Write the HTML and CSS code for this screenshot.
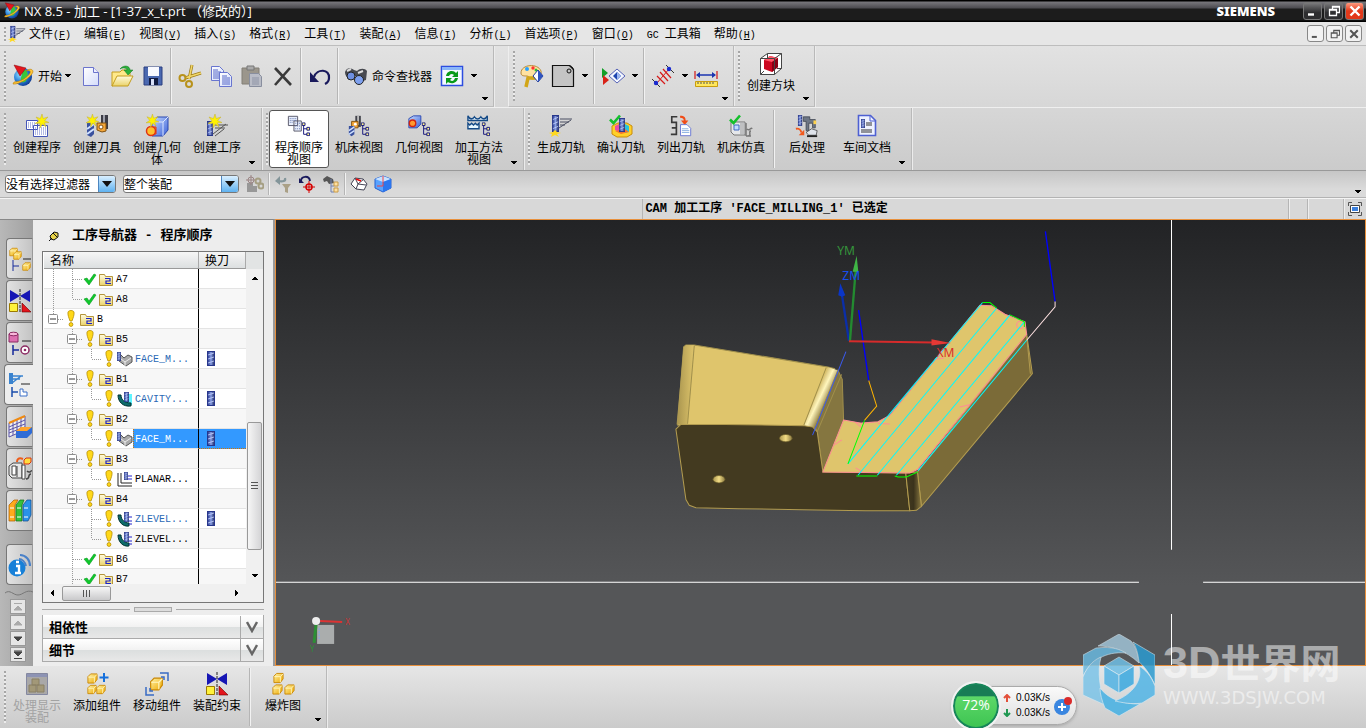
FILE: index.html
```html
<!DOCTYPE html>
<html lang="zh-CN">
<head>
<meta charset="utf-8">
<title>NX 8.5 - 加工</title>
<link rel="stylesheet" href="styles.css">
</head>
<body>
<svg class="defs" aria-hidden="true">
<defs>
<linearGradient id="g-gold" x1="0" y1="0" x2="1" y2="1"><stop offset="0" stop-color="#fff3a8"/><stop offset="1" stop-color="#eda800"/></linearGradient>
<linearGradient id="g-folder" x1="0" y1="0" x2="0" y2="1"><stop offset="0" stop-color="#fffbe0"/><stop offset="1" stop-color="#ead36a"/></linearGradient>
<linearGradient id="g-page" x1="0" y1="0" x2="1" y2="1"><stop offset="0" stop-color="#fff"/><stop offset="1" stop-color="#d4dcfa"/></linearGradient>
<linearGradient id="g-steel" x1="0" y1="0" x2="1" y2="0"><stop offset="0" stop-color="#1d2f86"/><stop offset=".5" stop-color="#8aa0e6"/><stop offset="1" stop-color="#1b2660"/></linearGradient>
<linearGradient id="g-blue" x1="0" y1="0" x2="1" y2="1"><stop offset="0" stop-color="#c6dbff"/><stop offset="1" stop-color="#3d62d8"/></linearGradient>
<linearGradient id="g-fillet" gradientUnits="userSpaceOnUse" x1="460" y1="500" x2="502" y2="520"><stop offset="0" stop-color="#c9ae5a"/><stop offset=".5" stop-color="#fff6bd"/><stop offset="1" stop-color="#9b894b"/></linearGradient>
<linearGradient id="g-corner" x1="0" y1="0" x2="1" y2="0"><stop offset="0" stop-color="#443b20"/><stop offset=".5" stop-color="#3b331c"/><stop offset="1" stop-color="#8a7940"/></linearGradient>
<linearGradient id="g-edge" x1="0" y1="0" x2="1" y2="0"><stop offset="0" stop-color="#a8944e"/><stop offset="1" stop-color="#dfc56c"/></linearGradient>
<linearGradient id="g-hole" x1="0" y1="0" x2="1" y2="0"><stop offset="0" stop-color="#a8944e"/><stop offset=".5" stop-color="#f3dd85"/><stop offset="1" stop-color="#8a7940"/></linearGradient>
<radialGradient id="g-globe" cx=".35" cy=".35" r=".7"><stop offset="0" stop-color="#9be8ff"/><stop offset=".6" stop-color="#2178d8"/><stop offset="1" stop-color="#123a90"/></radialGradient>

<symbol id="arrow" viewBox="0 0 6 4"><path d="M0 0h6v1h-1v1h-1v1h-2v-1h-1v-1h-1z"/></symbol>
<symbol id="down" viewBox="0 0 12 8"><path d="M1 1h10L6 7z" fill="#111"/></symbol>
<symbol id="star" viewBox="0 0 14 14"><path d="M7 0l1.200 4.500L13 3 9.600 6.600 14 8.500 9.400 8.800 11 13 7.500 10 5 14 5 9.300 0 9.500 4 7 1 3 5.400 4.600z" fill="#fff200" stroke="#c7b53e" stroke-width=".6"/></symbol>
<symbol id="mill" viewBox="0 0 8 15" preserveAspectRatio="none"><rect x=".5" y=".5" width="7" height="14" fill="url(#g-steel)" stroke="#27368c"/><path d="M1 4l6-2M1 8l6-2M1 12l6-2" stroke="#c8d4ff" stroke-width=".8"/></symbol>
<symbol id="bits" viewBox="0 0 9 15"><path d="M2 3v10h4M2 7h4" fill="none" stroke="#10107c"/><g fill="#fff689" stroke="#10107c"><path d="M.5.5h3v3h-3zM5.500 5.500h3v3h-3zM5.500 11.500h3v3h-3z"/></g></symbol>
<symbol id="brick" viewBox="0 0 12 12"><path d="M1 4l3-3h7v6l-3 4H1z" fill="url(#g-gold)" stroke="#c98600"/><path d="M1.500 4.500H8v6M8 4.500l3-3" fill="none" stroke="#fff6c0"/></symbol>
<symbol id="tick" viewBox="0 0 12 11"><path d="M1 5.500L4.500 9 11 1.500" fill="none" stroke="#14c02c" stroke-width="2.600"/></symbol>

<symbol id="nx" viewBox="0 0 24 24"><circle cx="12" cy="13" r="9" fill="url(#g-globe)"/><path d="M12 5c5 1 6 6 3 12-3 3-6 1-5-3z" fill="#38c73c"/><path d="M2 20c4 1 17-5 20-12 0-4-5-3-7-1 4-1 5 0 4 2-3 5-10 9-16 9z" fill="#ffc636" stroke="#b87900" stroke-width=".6"/><path d="M3 1l12 3-6 8z" fill="#e3151d" stroke="#8b0008" stroke-width=".5"/></symbol>
<symbol id="new" viewBox="0 0 24 24"><path d="M4.500 3.500h10l5 5v13h-15z" fill="url(#g-page)" stroke="#6b74cc"/><path d="M14.500 3.500v5h5" fill="#eef" stroke="#6b74cc"/></symbol>
<symbol id="open" viewBox="0 0 24 24"><path d="M2 22V8h8l2-2h8v9z" fill="#ffe98a" stroke="#c49d1e"/><path d="M2 22l5-10h16l-5 10z" fill="url(#g-folder)" stroke="#c49d1e"/><path d="M10 5c4-5 10-3 10 1h3l-5 5-4-5h3c0-2-4-3-7-1z" fill="#2bb03a" stroke="#137722" stroke-width=".5"/></symbol>
<symbol id="save" viewBox="0 0 24 24"><path d="M3 3h18v18H3z" fill="#4a68b0" stroke="#2a3f80"/><path d="M7 3h11v9H7z" fill="#f8f9ff"/><path d="M8 14h9v7H8z" fill="#111b40"/><path d="M10 15h3v6h-3z" fill="#d8e0f8"/></symbol>
<symbol id="cut" viewBox="0 0 24 24"><path d="M14 1l-3 14M23 9L7 14" stroke="#9f7d16" stroke-width="3"/><path d="M14 1l-3 14M23 9L7 14" stroke="#f1d76a" stroke-width="1.500"/><circle cx="4.500" cy="14" r="3" fill="none" stroke="#b8921c" stroke-width="2"/><circle cx="11" cy="20" r="3" fill="none" stroke="#b8921c" stroke-width="2"/></symbol>
<symbol id="copy" viewBox="0 0 24 24"><g fill="url(#g-page)" stroke="#6875cf"><path d="M2.500 2.500h8l4 4v10h-12z"/><path d="M10.500 8.500h8l4 4v10h-12z"/></g><path d="M4 6h5M4 8h8M4 10h6M4 12h6M4 14h6M13 12h5M13 14h8M13 16h8M13 18h8M13 20h8" stroke="#5567c8"/></symbol>
<symbol id="paste" viewBox="0 0 24 24"><path d="M2 4h17v16H2z" fill="#9b968c" stroke="#827e77"/><path d="M7 2h7v4H7z" fill="#aaa" stroke="#777"/><path d="M9.500 9.500h9l3 3v10h-12z" fill="#b9bcc6" stroke="#888e9e"/><path d="M12 14h7M12 16h7M12 18h7M12 20h7" stroke="#8d93a5"/></symbol>
<symbol id="del" viewBox="0 0 24 24"><path d="M4 4l16 17M19 4L4 21" stroke="#3a3a3a" stroke-width="2.600"/></symbol>
<symbol id="undo" viewBox="0 0 24 24"><path d="M6 13c3-9 16-8 15 1 0 3-2 5-4 6" fill="none" stroke="#1a1a5c" stroke-width="2.200"/><path d="M2 8v10h9z" fill="#1a1a5c"/></symbol>
<symbol id="bino" viewBox="0 0 24 24"><path d="M1 8c2-5 6-4 9-2l3 1c3-3 8-3 10 0l-1 9-6 2-4-6-5 2c-3 1-6-2-6-6z" fill="#47494f"/><circle cx="7" cy="12" r="4" fill="#6e8fe0" stroke="#222"/><circle cx="15" cy="16" r="4.500" fill="#7ea0ee" stroke="#222"/><path d="M3 7l4-2M14 9l5-2" stroke="#ddd" stroke-width="2"/></symbol>
<symbol id="refresh" viewBox="0 0 24 24"><path d="M1.500 2.500h21v19h-21z" fill="#f4f8ff" stroke="#2d4de0" stroke-width="1.500"/><path d="M2 3h20v3H2z" fill="#8ab6f8"/><g fill="#089a18"><path d="M6 12c1-6 8-6 10-3l2-2v6h-6l2-2c-2-2-4-1-5 1z"/><path d="M18 14c-1 6-8 6-10 4l-2 2v-6h6l-2 2c2 2 4 1 5-2z"/></g></symbol>
<symbol id="palette" viewBox="0 0 24 24"><path d="M1 9c0-9 17-10 20-2 1 6-3 8-9 8-3 0-2-3-5-3S1 12 1 9z" fill="#ffe2a0" stroke="#b78a3a"/><circle cx="7" cy="5" r="2" fill="#29a0ff"/><circle cx="13" cy="4" r="1.700" fill="#f33"/><circle cx="16" cy="6" r="1.500" fill="#3b3"/><path d="M6 23l2-9 9 0" stroke="#d2a618" stroke-width="3.500" fill="none"/><path d="M18 6l5 6-5 6-5-6z" fill="#fff" stroke="#223c9a"/><path d="M18 6l5 6-5 6z" fill="#3055c0"/></symbol>
<symbol id="sheet" viewBox="0 0 24 24"><path d="M1.500 1.500h17l4 4v17h-21z" fill="#c4c4c4" stroke="#111" stroke-width="1.200"/><path d="M16 1.500c4 0 6 1 6.500 5" fill="none" stroke="#111"/><circle cx="18" cy="7" r="2" fill="none" stroke="#111"/></symbol>
<symbol id="play" viewBox="0 0 24 24"><path d="M1 4l6 5-6 5z" fill="#12a028"/><path d="M2 11l6 5-6 5z" fill="#d82218"/><path d="M16 5l8 7-8 7-8-7z" fill="#f4f7ff" stroke="#5662b6"/><path d="M16 8l4 4-4 4-4-4z" fill="#1e46b0"/><path d="M16 8l4 4-4 4z" fill="#9db6ee"/></symbol>
<symbol id="measure" viewBox="0 0 24 24"><path d="M1 15l8 8M15 1l8 8" stroke="#333"/><path d="M6 19L18 5" stroke="#d61b1b"/><path d="M6 12l8 8M9 8l8 9M12 5l8 9" stroke="#d61b1b" stroke-width="1.200"/><circle cx="5" cy="19" r="2.200" fill="#1b2bd0"/><circle cx="18" cy="5" r="2.200" fill="#1b2bd0"/></symbol>
<symbol id="ruler" viewBox="0 0 24 24"><path d="M1 7v8M23 7v8" stroke="#d01818" stroke-width="1.200"/><path d="M3 11h18" stroke="#1b34b0" stroke-width="1.500"/><path d="M2 11l4-3v6zM22 11l-4-3v6z" fill="#1b34b0"/><path d="M1.500 17.500h22v5h-22z" fill="#ffe75c" stroke="#c99d0e"/><path d="M4 18v2M7 18v2M10 18v2M13 18v2M16 18v2M19 18v2" stroke="#555"/></symbol>
<symbol id="cube" viewBox="0 0 24 24"><path d="M1.500 6.500l7-5h14v15l-7 6h-14z" fill="#fff" stroke="#444"/><path d="M5 8l6-4 8 2v9l-6 5-8-3z" fill="#cc0720"/><path d="M5 8l6-4 8 2-6 4z" fill="#ff5566"/><path d="M13 10l6-4v9l-6 5z" fill="#8a0014"/><path d="M1.500 6.500h14v16M15.500 6.500l7-5M8.500 1.500v5M18 16.500h4.500M5 19l-3.500 3.500" fill="none" stroke="#444"/></symbol>

<symbol id="c-prog" viewBox="0 0 24 24"><path d="M1.500 6.500h11v9h-11zM8.500 11.500h14v11h-14z" fill="#fff" stroke="#4657b8"/><path d="M3 9h8M3 11h8M3 13h5M10 14h11M10 16h11M10 18h11M10 20h11" stroke="#6876c8" stroke-dasharray="1 1"/><use href="#star" x="10" y="0" width="14" height="14"/></symbol>
<symbol id="c-tool" viewBox="0 0 24 24"><path d="M16 1h7v14h-7z" fill="#3c3c46"/><path d="M18 1h2v14h-2z" fill="#9ea0aa"/><path d="M12 9h9v8l-4 1-5-2z" fill="#f3a63a" stroke="#81500e"/><circle cx="16" cy="13" r="2" fill="#fff" stroke="#81500e"/><path d="M2 9h7v11l-3 3-4-2z" fill="#39519e"/><path d="M2 15l7-5M2 20l7-5" stroke="#cfe0ff" stroke-width="2"/><use href="#star" x="1" y="0" width="13" height="13"/></symbol>
<symbol id="c-geo" viewBox="0 0 24 24"><path d="M7 8l5-5h11v13l-5 6H7z" fill="url(#g-blue)" stroke="#2a48b0"/><path d="M7 8h11v14M18 8l5-5" fill="none" stroke="#dbe6ff"/><path d="M6 13h5v7H6z" fill="#ffbf2e" stroke="#e03311"/><circle cx="6" cy="17" r="4.500" fill="#ffbf2e" stroke="#e03311" stroke-width="1.500"/><use href="#star" x="1" y="0" width="13" height="13"/></symbol>
<symbol id="c-op" viewBox="0 0 24 24"><use href="#mill" x="2" y="7" width="6" height="15"/><path d="M10 11h13M10 14h10M8 20l13-10M10 22l9-7" stroke="#555"/><use href="#star" x="3" y="0" width="14" height="14"/></symbol>
<symbol id="v-prog" viewBox="0 0 26 24"><path d="M1.500 1.500h10v10h-10zM7.500 6.500h8v11h-8z" fill="#e8eefc" stroke="#556"/><path d="M3 4h7M3 6h7M3 8h4M9 9h5M9 12h5M9 15h5" stroke="#5a6fa8" stroke-dasharray="1 1"/><use href="#bits" x="16" y="8" width="9" height="15"/></symbol>
<symbol id="v-mach" viewBox="0 0 26 24"><path d="M9 1h6v12H9z" fill="#44454d"/><path d="M11 1h2v10h-2z" fill="#bbb"/><path d="M5 7h7v7H5z" fill="#f3a63a" stroke="#81500e"/><circle cx="9" cy="10" r="1.500" fill="#fff"/><path d="M2 12h6v9l-3 2-3-2z" fill="#39519e"/><path d="M2 17l6-4M2 21l6-4" stroke="#cfe0ff" stroke-width="1.500"/><use href="#bits" x="15" y="8" width="9" height="15"/></symbol>
<symbol id="v-geo" viewBox="0 0 26 24"><path d="M2 4l5-3h8v9l-4 4H2z" fill="url(#g-blue)" stroke="#2a48b0"/><circle cx="6" cy="9" r="3.500" fill="#ff9a2e" stroke="#d2230f" stroke-width="1.500"/><use href="#bits" x="16" y="8" width="9" height="15"/></symbol>
<symbol id="v-meth" viewBox="0 0 26 24"><g fill="#e8f7ff" stroke="#154a86" stroke-width="1.500"><path d="M1 1v5h21V1c-2 4-5 4-7 1-2 3-5 3-7 0-2 3-5 3-7-1z"/><path d="M1 15V9l2 2 2-2 2 2 2-2 2 2 2-2v6z"/></g><use href="#bits" x="16" y="8" width="9" height="15"/></symbol>
<symbol id="gen" viewBox="0 0 24 24"><use href="#mill" x="3" y="1" width="7" height="17"/><path d="M11 5h12M11 8h9M11 11h5M10 14L22 6" stroke="#4a4f62"/><path d="M0 19l4-1 2-2 2 2 4 1-4 1 2 3-4-2-4 2 1-3z" fill="#ffd91f"/></symbol>
<symbol id="verify" viewBox="0 0 24 24"><path d="M3 12l6-3h9l5 3v8l-5 3H8l-5-3z" fill="#ffd028" stroke="#c98d0b"/><path d="M6 12l4-2v8l-4-2z" fill="#e74caa"/><path d="M16 10l4 2v6l-4 1z" fill="#28c4de"/><path d="M6 17l6 3 8-2-4-3z" fill="#f4762c"/><use href="#mill" x="10" y="4" width="6" height="14"/><use href="#tick" x="0" y="0" width="12" height="11"/></symbol>
<symbol id="list" viewBox="0 0 26 24"><path d="M9 2H3v6h5v6H3M3 14v0h5v7H2" fill="none" stroke="#393939" stroke-width="1.800"/><path d="M12 1c5 0 6 2 6 5h3l-4 5-4-5h3c0-2-1-3-4-3z" fill="#f04c18"/><path d="M12.500 10.500h7l4 4v8h-11z" fill="#fff" stroke="#6573d0"/><path d="M14 15h7M14 17h8M14 19h8" stroke="#87aee0"/></symbol>
<symbol id="sim" viewBox="0 0 24 24"><path d="M2 8h14v13H5l-3-3z" fill="#e5e7ea" stroke="#777"/><path d="M5 11h5v5H5z" fill="#c0dcff" stroke="#4169bf"/><path d="M12 9v11M14 9v11" stroke="#999"/><path d="M17 9v13M19 22c4 0 0-5 3-5M18 15c3 3 4-3 5 0M17 22h5" stroke="#777" stroke-width="1.500" fill="none"/><use href="#tick" x="0" y="0" width="12" height="11"/></symbol>
<symbol id="post" viewBox="0 0 26 24"><use href="#mill" x="3" y="0" width="5" height="12"/><path d="M1 15c4-1 5 1 6 4" fill="none" stroke="#f1591d" stroke-width="2"/><path d="M10 16v6H4z" fill="#f1591d"/><path d="M9 2h7v3h6v9h-3V9h-4v8h-3V7H9z" fill="#6e7785" stroke="#2d3340" stroke-width=".7"/><path d="M12 19l6-4 6 2-1 5h-8z" fill="#dfe3ea" stroke="#222" stroke-width=".7"/><path d="M13 23h11" stroke="#222" stroke-width="2"/><path d="M20 6h3v4h-3z" fill="#ffd34d"/></symbol>
<symbol id="doc" viewBox="0 0 24 24"><path d="M3.500 1.500h12l5 5v15h-17z" fill="#eef2ff" stroke="#4e60d2" stroke-width="1.600"/><path d="M15 2v5h5" fill="none" stroke="#4e60d2"/><use href="#mill" x="6" y="5" width="4" height="9"/><path d="M11 9h6M11 11h6M6 16h11M6 18h11" stroke="#333"/></symbol>

<symbol id="f-link" viewBox="0 0 18 18"><path d="M1 8h6v9H1zM6 11h5v6H6z" fill="#989898"/><circle cx="5" cy="5" r="3" fill="none" stroke="#9b8585"/><path d="M5 0v10M0 5h10" stroke="#9b8585"/><circle cx="12" cy="6" r="2.500" fill="none" stroke="#a59f83" stroke-width="2"/><circle cx="15" cy="11" r="2.500" fill="none" stroke="#a59f83" stroke-width="2"/></symbol>
<symbol id="f-filter" viewBox="0 0 18 18"><path d="M4 6c5 1 8 0 7-3" fill="none" stroke="#83959a" stroke-width="2.200"/><path d="M6 1v9L1 6z" fill="#83959a"/><path d="M8 9h9l-3 4v5l-3-1v-4z" fill="#aaa086"/></symbol>
<symbol id="f-target" viewBox="0 0 18 18"><path d="M3 6c0-5 8-6 9 0" fill="none" stroke="#1a1a5c" stroke-width="2"/><path d="M1 3v5h5z" fill="#1a1a5c"/><circle cx="11" cy="12" r="3" fill="none" stroke="#d60000" stroke-width="1.500"/><path d="M11 6v12M5 12h12" stroke="#d60000"/></symbol>
<symbol id="f-find" viewBox="0 0 18 18"><path d="M1 4l4-3 6 3 1 4-5 1-2-3-3 1z" fill="#555"/><path d="M9 4v13h3M9 11h3" stroke="#7080b0" fill="none"/><path d="M12 7h4v4h-4zM12 13h4v4h-4z" fill="#ffe0a0" stroke="#c89a48"/></symbol>
<symbol id="f-solid" viewBox="0 0 18 18"><path d="M1 9l4-6 8 1 4 5-3 6-8-1z" fill="#fff" stroke="#445"/><path d="M5 3l3 6-2 5M8 9l6-5M8 9l8 1" stroke="#445" fill="none"/><path d="M6 4l5 2" stroke="#e00" stroke-width="1.500"/></symbol>
<symbol id="f-box" viewBox="0 0 18 18"><path d="M1 4l8-3 8 3v9l-8 4-8-4z" fill="#59a3ff" stroke="#2660d0"/><path d="M1 4l8 3 8-3-8-3z" fill="#c8e2ff"/><path d="M9 7l8-3v9l-8 4z" fill="#2b76ee"/><path d="M9 1v10H3" stroke="#e44" fill="none"/></symbol>

<symbol id="t-asm" viewBox="0 0 24 24"><use href="#brick" x="1" y="0" width="9" height="10"/><use href="#brick" x="5" y="4" width="9" height="9"/><use href="#brick" x="14" y="15" width="9" height="9"/><path d="M5 13v11M5 19h6" stroke="#162a9a" fill="none"/><path d="M15 12h8" stroke="#222"/></symbol>
<symbol id="mate" viewBox="0 0 24 24"><path d="M2 1l10 6-10 6zM22 1L12 7l10 6z" fill="#1616b4"/><path d="M12 0v24" stroke="#222" stroke-dasharray="3 1"/><path d="M1.500 14.500h8v8h-8z" fill="#fff23c" stroke="#9c7a00"/><path d="M14 14l9 9h-9z" fill="#e3151d" stroke="#6b0000" stroke-width=".6"/></symbol>
<symbol id="t-part" viewBox="0 0 24 24"><path d="M1 3h9v8H1z" fill="#dd6fb0" stroke="#8b2a62"/><ellipse cx="5.500" cy="3" rx="4.500" ry="1.800" fill="#f8b6da" stroke="#8b2a62"/><path d="M14 10h9" stroke="#222"/><path d="M5 14v10M5 19h6" stroke="#162a9a" stroke-width="1.500"/><circle cx="17" cy="19" r="4" fill="#fff" stroke="#8b2a62" stroke-width="1.500"/><circle cx="17" cy="19" r="1.300" fill="#8b2a62"/></symbol>
<symbol id="t-op" viewBox="0 0 24 24"><path d="M2 0h4v11H2z" fill="#3a83cf"/><path d="M6 3h10M6 6h7M5 10l9-7" stroke="#3a83cf" stroke-width="1.500"/><path d="M14 11h9" stroke="#222"/><path d="M5 14v10M5 19h6" stroke="#1b4dac" stroke-width="1.500"/><path d="M13 16h3v3h4v4h-7z" fill="#fff" stroke="#3a6fc7"/></symbol>
<symbol id="t-grid" viewBox="0 0 24 24"><path d="M1 8l16-7v14L1 22zM1 12l16-7M1 15l16-6M1 18l16-6M5 6v14M9 5v13M13 3v14" fill="#fff" fill-opacity=".6" stroke="#5a54a8"/><path d="M1 8l16-7" stroke="#f08a10" stroke-width="2"/><path d="M8 16l5-4h11v6l-5 5H8z" fill="#2f6cd6"/><path d="M8 16l5-4h11l-5 4z" fill="#ffa32b"/></symbol>
<symbol id="t-mach" viewBox="0 0 24 24"><path d="M1 9l4-3h9v15H4l-3-3z" fill="#e7e7e7" stroke="#444"/><path d="M4 9h4v9H4zM9 9v11M14 8h3v14h-3z" fill="#fff" stroke="#444"/><path d="M18 22c5 0 1-5 5-5M19 14c3 3 4-1 5 0" fill="none" stroke="#444" stroke-width="1.500"/><path d="M15 2C10 0 9 3 9 5" fill="none" stroke="#ee5b18" stroke-width="2"/><path d="M16 3l2-2h5v4l-2 2h-5z" fill="#ffdc3e" stroke="#d8320e"/></symbol>
<symbol id="t-books" viewBox="0 0 24 24"><g stroke-width=".7"><path d="M1 6l5-5h4L7 6v16H1z" fill="#ffaa1c" stroke="#ad5b00"/><path d="M8 6l4-5h4l-2 5v16H8z" fill="#35c23a" stroke="#146f19"/><path d="M15 6l4-5h4v15l-3 6h-5z" fill="#2a92e8" stroke="#10488a"/></g><path d="M2 9h4M2 18h4M9 9h4M9 18h4M16 9h4M16 18h4" stroke="#fff"/></symbol>
<symbol id="t-info" viewBox="0 0 24 24"><circle cx="9" cy="15" r="8.500" fill="#1780d8"/><path d="M8 13h3v7M7 20h6M8 9h3" stroke="#fff" stroke-width="2.400" fill="none"/><path d="M11 6c3 0 6 3 7 7M12 2c6 0 10 5 10 11" fill="none" stroke="#4a81c8" stroke-width="2"/></symbol>

<symbol id="pin" viewBox="0 0 12 12"><path d="M2 6l4-4 4 1v4L6 10 3 9z" fill="#e8d34a" stroke="#111"/><path d="M1 11l3-3M5 3l4 4" stroke="#111"/></symbol>
<symbol id="ok" viewBox="0 0 16 20"><path d="M2 10l3-1 2 3 5-7 2 1-7 10z" fill="#0fc92c" stroke="#06991c" stroke-width=".6"/></symbol>
<symbol id="bang" viewBox="0 0 16 20"><path d="M5 3c1-2 5-2 6 0 .5 3-1 6-2 9H7C6 9 4.500 6 5 3z" fill="#ffd819" stroke="#b58b00" stroke-width=".8"/><circle cx="8" cy="15.500" r="1.900" fill="#ffd819" stroke="#b58b00" stroke-width=".8"/></symbol>
<symbol id="folder" viewBox="0 0 16 20"><path d="M1.500 5.500h5l1 2h7v9h-13z" fill="url(#g-folder)" stroke="#b4953a"/><path d="M7 9.500h5v2.500H8v2.500h5" fill="none" stroke="#1a22c8" stroke-width="1.200"/></symbol>
<symbol id="o-face" viewBox="0 0 16 20"><path d="M1 8l3-2 3 3 4-3 4 2v5l-6 4-7-5z" fill="#aaa" stroke="#555"/><path d="M4 10l4 3 6-4M8 13v4" stroke="#eee" fill="none"/><use href="#mill" x="0" y="3" width="4" height="9"/></symbol>
<symbol id="o-cavity" viewBox="0 0 16 20"><path d="M8 5h7v11H6z" fill="#5ff4ff"/><path d="M1 6h3c0 5 4 8 10 8v3C6 18 1 13 1 6z" fill="#0d6b6a" stroke="#033"/><use href="#mill" x="7" y="3" width="5" height="10"/></symbol>
<symbol id="o-planar" viewBox="0 0 16 20"><path d="M1 4v13h14M4 4v10h11" fill="none" stroke="#222"/><use href="#mill" x="7" y="3" width="4" height="8"/><path d="M11 7h4M11 10h4" stroke="#22c"/></symbol>
<symbol id="o-zlevel" viewBox="0 0 16 20"><path d="M1 6h3c0 5 4 8 8 8v3C6 18 1 13 1 6z" fill="#0d6b6a" stroke="#033"/><use href="#mill" x="7" y="3" width="5" height="10"/><path d="M12 8h3M12 12h3M12 15h3" stroke="#22c"/></symbol>
<symbol id="gv" viewBox="0 0 19 20"><path d="M9.500 0v20" class="dots"/></symbol>
<symbol id="gt" viewBox="0 0 19 20"><path d="M9.500 0v20M10 10.500h9" class="dots"/></symbol>
<symbol id="gl" viewBox="0 0 19 20"><path d="M9.500 0v10M10 10.500h9" class="dots"/></symbol>
<symbol id="gb" viewBox="0 0 19 20"><path d="M9.500 0v6M14 10.500h5" class="dots"/><rect x="4.500" y="5.500" width="9" height="9" rx="1" fill="#fff" stroke="#8c8c8c"/><path d="M6 10h6" stroke="#333"/></symbol>
<symbol id="gm" viewBox="0 0 19 20"><path d="M9.500 0v20M14 10.500h5" class="dots"/><rect x="4.500" y="5.500" width="9" height="9" rx="1" fill="#fff" stroke="#8c8c8c"/><path d="M6 10h6" stroke="#333"/></symbol>

<symbol id="b-proc" viewBox="0 0 24 24"><path d="M1.500 1.500h21v21h-21z" fill="#a9a8a8" stroke="#8488a0"/><path d="M2 2h20v3H2z" fill="#8d93b4"/><path d="M4 13h7v7H4zM12 13h7v7h-7zM7 7h7v6H7z" fill="#a29878" stroke="#8a8065"/></symbol>
<symbol id="b-add" viewBox="0 0 24 24"><use href="#brick" x="2" y="1" width="11" height="11"/><use href="#brick" x="2" y="12" width="10" height="11"/><use href="#brick" x="11" y="12" width="10" height="11"/><path d="M19 1v9M14.500 5.500h9" stroke="#1670dc" stroke-width="2"/></symbol>
<symbol id="b-move" viewBox="0 0 24 24"><use href="#brick" x="4" y="5" width="15" height="14"/><path d="M15 1h8v8M16 5h3v3M1 15v8h8M5 16v3h3" fill="none" stroke="#386bc4" stroke-width="1.500"/></symbol>
<symbol id="b-explode" viewBox="0 0 24 24"><use href="#brick" x="2" y="0" width="11" height="12"/><use href="#brick" x="1" y="12" width="11" height="11"/><use href="#brick" x="13" y="12" width="11" height="11"/></symbol>
<symbol id="chev" viewBox="0 0 12 12"><path d="M1 1l5 9 5-9" fill="none" stroke="#666" stroke-width="2.400"/></symbol>
<symbol id="w-min" viewBox="0 0 12 12"><path d="M1 9.500h6" stroke="currentColor" stroke-width="2.400"/></symbol>
<symbol id="w-res" viewBox="0 0 12 12"><path d="M4.500 4V1.500h7v6H9M1.500 4.500h7v6h-7zM1 5h8M4 2h8" fill="none" stroke="currentColor" stroke-width="1.300"/></symbol>
<symbol id="w-x" viewBox="0 0 12 12"><path d="M1.500 1.500l9 9M10.500 1.500l-9 9" stroke="currentColor" stroke-width="2.400"/></symbol>
</defs>
</svg>

<div class="app">
<header class="titlebar">
  <svg class="s18"><use href="#nx"/></svg>
  <h1>NX 8.5 - 加工 - [1-37_x_t.prt （修改的）]</h1>
  <span class="brand">SIEMENS</span>
  <div class="winbtns">
    <button aria-label="最小化"><svg><use href="#w-min"/></svg></button>
    <button aria-label="还原"><svg><use href="#w-res"/></svg></button>
    <button class="close" aria-label="关闭"><svg><use href="#w-x"/></svg></button>
  </div>
</header>

<nav class="menubar">
  <span class="grip"></span>
  <svg class="s18"><use href="#gen"/></svg>
  <div class="menus">
  <button>文件<i>(<u>F</u>)</i></button><button>编辑<i>(<u>E</u>)</i></button><button>视图<i>(<u>V</u>)</i></button><button>插入<i>(<u>S</u>)</i></button><button>格式<i>(<u>R</u>)</i></button><button>工具<i>(<u>T</u>)</i></button><button>装配<i>(<u>A</u>)</i></button><button>信息<i>(<u>I</u>)</i></button><button>分析<i>(<u>L</u>)</i></button><button>首选项<i>(<u>P</u>)</i></button><button>窗口<i>(<u>O</u>)</i></button><button><i>GC </i>工具箱</button><button>帮助<i>(<u>H</u>)</i></button>
  </div>
  <div class="mdibtns">
    <button aria-label="最小化窗口"><svg><use href="#w-min"/></svg></button>
    <button aria-label="还原窗口"><svg><use href="#w-res"/></svg></button>
    <button aria-label="关闭窗口"><svg><use href="#w-x"/></svg></button>
  </div>
</nav>

<div class="toolbars">
<div class="row">
  <div class="group">
    <span class="grip"></span>
    <button class="wide start"><svg><use href="#nx"/></svg>开始<svg class="dd"><use href="#arrow"/></svg></button>
    <button class="ib" aria-label="新建"><svg><use href="#new"/></svg></button>
    <button class="ib" aria-label="打开"><svg><use href="#open"/></svg></button>
    <button class="ib" aria-label="保存"><svg><use href="#save"/></svg></button>
    <span class="sep"></span>
    <button class="ib" aria-label="剪切"><svg><use href="#cut"/></svg></button>
    <button class="ib" aria-label="复制"><svg><use href="#copy"/></svg></button>
    <button class="ib" aria-label="粘贴"><svg><use href="#paste"/></svg></button>
    <button class="ib" aria-label="删除"><svg><use href="#del"/></svg></button>
    <span class="sep"></span>
    <button class="ib" aria-label="撤销"><svg><use href="#undo"/></svg></button>
    <span class="sep"></span>
    <button class="wide finder"><svg><use href="#bino"/></svg>命令查找器</button>
    <button class="ib" aria-label="刷新"><svg><use href="#refresh"/></svg></button>
    <button class="ddb" aria-label="更多刷新"><svg class="dd"><use href="#arrow"/></svg></button>
    <button class="more" aria-label="工具条选项"><svg class="dd"><use href="#arrow"/></svg></button>
  </div>
  <div class="group spaced">
    <span class="grip"></span>
    <button class="ib" aria-label="编辑对象显示"><svg><use href="#palette"/></svg></button>
    <button class="ib" aria-label="图层"><svg><use href="#sheet"/></svg></button>
    <button class="ddb" aria-label="图层选项"><svg class="dd"><use href="#arrow"/></svg></button>
    <span class="sep"></span>
    <button class="ib" aria-label="显示和隐藏"><svg><use href="#play"/></svg></button>
    <button class="ddb" aria-label="显示选项"><svg class="dd"><use href="#arrow"/></svg></button>
    <span class="sep"></span>
    <button class="ib" aria-label="测量距离"><svg><use href="#measure"/></svg></button>
    <button class="ddb" aria-label="测量选项"><svg class="dd"><use href="#arrow"/></svg></button>
    <button class="ib tight" aria-label="尺寸"><svg><use href="#ruler"/></svg></button>
    <button class="more" aria-label="工具条选项"><svg class="dd"><use href="#arrow"/></svg></button>
  </div>
  <div class="group">
    <span class="grip"></span>
    <button class="tb"><svg><use href="#cube"/></svg><span>创建方块</span></button>
    <button class="more" aria-label="工具条选项"><svg class="dd"><use href="#arrow"/></svg></button>
  </div>
</div>
<div class="row">
  <div class="group">
    <span class="grip"></span>
    <button class="tb"><svg><use href="#c-prog"/></svg><span>创建程序</span></button>
    <button class="tb"><svg><use href="#c-tool"/></svg><span>创建刀具</span></button>
    <button class="tb"><svg><use href="#c-geo"/></svg><span>创建几何体</span></button>
    <button class="tb"><svg><use href="#c-op"/></svg><span>创建工序</span></button>
    <button class="more" aria-label="工具条选项"><svg class="dd"><use href="#arrow"/></svg></button>
  </div>
  <div class="group">
    <span class="grip"></span>
    <button class="tb on"><svg><use href="#v-prog"/></svg><span>程序顺序视图</span></button>
    <button class="tb"><svg><use href="#v-mach"/></svg><span>机床视图</span></button>
    <button class="tb"><svg><use href="#v-geo"/></svg><span>几何视图</span></button>
    <button class="tb"><svg><use href="#v-meth"/></svg><span>加工方法视图</span></button>
    <button class="more" aria-label="工具条选项"><svg class="dd"><use href="#arrow"/></svg></button>
  </div>
  <div class="group">
    <span class="grip"></span>
    <button class="tb"><svg><use href="#gen"/></svg><span>生成刀轨</span></button>
    <button class="tb"><svg><use href="#verify"/></svg><span>确认刀轨</span></button>
    <button class="tb"><svg><use href="#list"/></svg><span>列出刀轨</span></button>
    <button class="tb"><svg><use href="#sim"/></svg><span>机床仿真</span></button>
    <span class="sep"></span>
    <button class="tb"><svg><use href="#post"/></svg><span>后处理</span></button>
    <button class="tb"><svg><use href="#doc"/></svg><span>车间文档</span></button>
    <button class="more" aria-label="工具条选项"><svg class="dd"><use href="#arrow"/></svg></button>
  </div>
</div>
</div>

<div class="selbar">
  <span class="combo"><select aria-label="选择过滤器"><option>没有选择过滤器</option></select><span class="cbtn"><svg><use href="#down"/></svg></span></span>
  <span class="combo second"><select aria-label="选择范围"><option>整个装配</option></select><span class="cbtn"><svg><use href="#down"/></svg></span></span>
  <button aria-label="关联"><svg><use href="#f-link"/></svg></button>
  <span class="sep"></span>
  <button aria-label="重置过滤器"><svg><use href="#f-filter"/></svg></button>
  <button aria-label="选择点"><svg><use href="#f-target"/></svg></button>
  <button aria-label="在导航器中查找"><svg><use href="#f-find"/></svg></button>
  <span class="sep"></span>
  <button aria-label="实体"><svg><use href="#f-solid"/></svg></button>
  <button aria-label="着色"><svg><use href="#f-box"/></svg></button>
  <button class="end" aria-label="选择条选项"><svg class="dd"><use href="#arrow"/></svg></button>
</div>

<div class="status">
  <span class="cue"></span>
  <strong>CAM 加工工序 'FACE_MILLING_1' 已选定</strong>
  <span class="cell c1"></span><span class="cell c2"></span>
  <button class="cell c3" aria-label="全屏"><svg viewBox="0 0 14 14"><path d="M.5 4V.5H4M10 .5h3.500V4M13.500 10v3.500H10M4 13.500H.5V10" fill="none" stroke="#555"/><path d="M2.500 3.500h9v7h-9z" fill="#fff" stroke="#444"/><path d="M4 5h6v4H4z" fill="#3a7fdd"/></svg></button>
</div>

<main class="main">
  <nav class="strip">
    <button aria-label="装配导航器"><svg><use href="#t-asm"/></svg></button>
    <button aria-label="约束导航器"><svg><use href="#mate"/></svg></button>
    <button aria-label="部件导航器"><svg><use href="#t-part"/></svg></button>
    <button class="active" aria-label="工序导航器"><svg><use href="#t-op"/></svg></button>
    <button aria-label="加工特征导航器"><svg><use href="#t-grid"/></svg></button>
    <button aria-label="机床导航器"><svg><use href="#t-mach"/></svg></button>
    <button aria-label="重用库"><svg><use href="#t-books"/></svg></button>
    <button class="gap" aria-label="互联网"><svg><use href="#t-info"/></svg></button>
    <svg class="curl" viewBox="0 0 28 8"><path d="M0 4c5-4 8 2 13 2s8-6 15-3" fill="none" stroke="#777"/></svg>
    <div class="nudge">
      <button class="off" aria-label="到顶"><svg viewBox="0 0 10 10"><path d="M1 1.500h8M1 8l4-4 4 4z"/></svg></button>
      <button class="off" aria-label="向上"><svg viewBox="0 0 10 10"><path d="M1 7l4-4 4 4z"/></svg></button>
      <button aria-label="向下"><svg viewBox="0 0 10 10"><path d="M1 3l4 4 4-4z"/></svg></button>
      <button aria-label="到底"><svg viewBox="0 0 10 10"><path d="M1 2l4 4 4-4zM1 8.500h8M1 1h8"/></svg></button>
    </div>
  </nav>

  <section class="panel">
    <h2><svg><use href="#pin"/></svg>工序导航器 - 程序顺序</h2>
    <div class="treebox">
      <div class="treeview">
      <table>
        <colgroup><col class="cname"><col></colgroup>
        <thead><tr><th>名称</th><th>换刀</th></tr></thead>
        <tbody>
        <tr><td><div><svg class="g"><use href="#gv"/></svg><svg class="g"><use href="#gt"/></svg><svg><use href="#ok"/></svg><svg><use href="#folder"/></svg><span>A7</span></div></td><td></td></tr>
        <tr><td><div><svg class="g"><use href="#gv"/></svg><svg class="g"><use href="#gl"/></svg><svg><use href="#ok"/></svg><svg><use href="#folder"/></svg><span>A8</span></div></td><td></td></tr>
        <tr><td><div><svg class="g"><use href="#gb"/></svg><svg><use href="#bang"/></svg><svg><use href="#folder"/></svg><span>B</span></div></td><td></td></tr>
        <tr><td><div><svg class="g"></svg><svg class="g"><use href="#gm"/></svg><svg><use href="#bang"/></svg><svg><use href="#folder"/></svg><span>B5</span></div></td><td></td></tr>
        <tr class="op"><td><div><svg class="g"></svg><svg class="g"><use href="#gv"/></svg><svg class="g"><use href="#gl"/></svg><svg><use href="#bang"/></svg><svg><use href="#o-face"/></svg><span>FACE_M...</span></div></td><td><svg class="m"><use href="#mill"/></svg></td></tr>
        <tr><td><div><svg class="g"></svg><svg class="g"><use href="#gm"/></svg><svg><use href="#bang"/></svg><svg><use href="#folder"/></svg><span>B1</span></div></td><td></td></tr>
        <tr class="op"><td><div><svg class="g"></svg><svg class="g"><use href="#gv"/></svg><svg class="g"><use href="#gl"/></svg><svg><use href="#bang"/></svg><svg><use href="#o-cavity"/></svg><span>CAVITY...</span></div></td><td><svg class="m"><use href="#mill"/></svg></td></tr>
        <tr><td><div><svg class="g"></svg><svg class="g"><use href="#gm"/></svg><svg><use href="#bang"/></svg><svg><use href="#folder"/></svg><span>B2</span></div></td><td></td></tr>
        <tr class="sel"><td><div><svg class="g"></svg><svg class="g"><use href="#gv"/></svg><svg class="g"><use href="#gl"/></svg><svg><use href="#bang"/></svg><svg><use href="#o-face"/></svg><span>FACE_M...</span></div></td><td><svg class="m"><use href="#mill"/></svg></td></tr>
        <tr><td><div><svg class="g"></svg><svg class="g"><use href="#gm"/></svg><svg><use href="#bang"/></svg><svg><use href="#folder"/></svg><span>B3</span></div></td><td></td></tr>
        <tr><td><div><svg class="g"></svg><svg class="g"><use href="#gv"/></svg><svg class="g"><use href="#gl"/></svg><svg><use href="#bang"/></svg><svg><use href="#o-planar"/></svg><span>PLANAR...</span></div></td><td></td></tr>
        <tr><td><div><svg class="g"></svg><svg class="g"><use href="#gm"/></svg><svg><use href="#bang"/></svg><svg><use href="#folder"/></svg><span>B4</span></div></td><td></td></tr>
        <tr class="op"><td><div><svg class="g"></svg><svg class="g"><use href="#gv"/></svg><svg class="g"><use href="#gt"/></svg><svg><use href="#bang"/></svg><svg><use href="#o-zlevel"/></svg><span>ZLEVEL...</span></div></td><td><svg class="m"><use href="#mill"/></svg></td></tr>
        <tr><td><div><svg class="g"></svg><svg class="g"><use href="#gv"/></svg><svg class="g"><use href="#gl"/></svg><svg><use href="#bang"/></svg><svg><use href="#o-zlevel"/></svg><span>ZLEVEL...</span></div></td><td></td></tr>
        <tr><td><div><svg class="g"></svg><svg class="g"><use href="#gt"/></svg><svg><use href="#ok"/></svg><svg><use href="#folder"/></svg><span>B6</span></div></td><td></td></tr>
        <tr><td><div><svg class="g"></svg><svg class="g"><use href="#gt"/></svg><svg><use href="#ok"/></svg><svg><use href="#folder"/></svg><span>B7</span></div></td><td></td></tr>
        </tbody>
      </table>
      </div>
      <div class="vscroll">
        <svg class="up dd"><use href="#arrow"/></svg><span class="track"></span><span class="thumb"><i></i></span><svg class="dd"><use href="#arrow"/></svg>
      </div>
      <div class="hscroll">
        <svg class="left dd"><use href="#arrow"/></svg><span class="thumb"><i></i></span><svg class="right dd"><use href="#arrow"/></svg>
      </div>
    </div>
    <div class="splitter"><span></span></div>
    <div class="folds">
      <button><span>相依性</span><svg><use href="#chev"/></svg></button>
      <button><span>细节</span><svg><use href="#chev"/></svg></button>
    </div>
  </section>

  <section class="view">
  <svg viewBox="276 221 1089 444" preserveAspectRatio="xMinYMin slice" role="img" aria-label="加工模型">
    <path d="M276 582.500H1137M1201 582.500H1366M1169.500 221V550M1169.500 614V666" stroke="#fff"/>
    <g transform="translate(660 225) scale(.33333)" stroke-width="3">
      <path d="M68 368L75 362H100L500 428L520 433L440 608L50 602Z" fill="#dfc56c" stroke="#a08f4c"/>
      <path d="M68 370L75 363H100L80 600H47Z" fill="url(#g-edge)"/>
      <path d="M100 364L80 598" stroke="#a08f4c"/>
      <path d="M500 429L530 438L460 610L428 604Z" fill="url(#g-fillet)"/>
      <path d="M530 438L543 465L547 590L485 742L468 620L460 608Z" fill="#857640" stroke="#a08f4c"/>
      <path d="M495 430L428 602M541 450L468 622" stroke="#a08f4c" fill="none"/>
      <path d="M768 742L1095 330L1112 448L780 845Z" fill="#7b6b38" stroke="#b39c50"/>
      <path d="M1095 335L1106 448" stroke="#b39c50"/>
      <path d="M45 614L60 600H190L430 604L455 608L468 622L485 742L733 745L745 858H612L423 855L234 852L105 849L85 842L75 825Z" fill="#433a20" stroke="#b39c50"/>
      <path d="M733 745L768 742L780 845L765 857L745 858Z" fill="url(#g-corner)" stroke="#b39c50"/>
      <g fill="url(#g-hole)" stroke="#665827" stroke-width="2"><ellipse cx="374" cy="641" rx="19" ry="11"/><ellipse cx="174" cy="764" rx="18" ry="11"/></g>
      <path d="M547 587L600 596L650 592L685 573L955 243L990 245L1030 270L1090 293L1095 330L768 735L745 745L485 742Z" fill="#dfc56c" stroke="#ff8d94"/>
      <path d="M583 594l17 15M518 662l24-16M583 730l20 12M650 597l35 2M895 548l28-7M820 405l28-4" stroke="#ff8d94"/>
      <circle cx="1076" cy="302" r="11" fill="none" stroke="#ff8d94"/>
      <g stroke="#00fbff" fill="none" stroke-width="3"><path d="M560 718L963 235M590 752L1005 252M648 752L1045 272M705 752L1088 293M770 738L1095 348"/></g>
      <path d="M963 235h22l20 17M1045 272l43 21v15M585 754h63M700 754l10 3h25l35-15M560 718L610 587" stroke="#0f0" fill="none"/>
      <path d="M610 587L646 545L622 468" stroke="#ffb400" fill="none"/>
      <path d="M622 468L592 258M1151 22L1180 232" stroke="#00f" stroke-width="4"/>
      <path d="M1180 232v16L1095 348" stroke="#ffe2e2" fill="none"/>
      <path d="M554 382L454 632" stroke="#3b5bef"/>
      <path d="M563 350L541 205" stroke="#0b2ea8" stroke-width="7"/><path d="M537 177l15 36-10 5-11-5z" fill="#0b36c8"/>
      <path d="M566 350L583 140" stroke="#238b30" stroke-width="7"/><path d="M586 95l5 48h-17z" fill="#3fb545"/>
      <path d="M563 351L815 355" stroke="#d62b2b" stroke-width="6"/><path d="M810 345l58 11-58 8z" fill="#e53935"/>
    </g>
    <g class="cad"><text x="836" y="256" fill="#35943b">YM</text><text x="841" y="281" fill="#174ff0">ZM</text><text x="935" y="358" fill="#d8302d">XM</text></g>
    <path d="M317 625h17v19h-17z" fill="#aaadad"/><path d="M320 621L342 622" stroke="#d33" stroke-width="2"/><path d="M316 624L314 643" stroke="#2d8f35" stroke-width="3"/><path d="M319 628v12" stroke="#8aa3e8" stroke-dasharray="2 1"/><circle cx="316" cy="621" r="4" fill="#eee"/>
    <g class="triad"><text x="345" y="625" fill="#c33">X</text><text x="310" y="652" fill="#2d8f35">Y</text></g>
  </svg>
  </section>
</main>

<footer class="bottombar">
  <div class="group">
    <span class="grip"></span>
    <button class="tb" disabled><svg><use href="#b-proc"/></svg><span>处理显示装配</span></button>
    <button class="tb"><svg><use href="#b-add"/></svg><span>添加组件</span></button>
    <button class="tb"><svg><use href="#b-move"/></svg><span>移动组件</span></button>
    <button class="tb"><svg><use href="#mate"/></svg><span>装配约束</span></button>
    <span class="sep"></span>
    <button class="tb"><svg><use href="#b-explode"/></svg><span>爆炸图</span></button>
    <button class="more" aria-label="工具条选项"><svg class="dd"><use href="#arrow"/></svg></button>
  </div>
</footer>

<aside class="meter">
  <span class="ball">72%</span>
  <div class="rates">
    <span><svg class="upc" viewBox="0 0 8 8"><path d="M4 8V2M1 4l3-3 3 3"/></svg>0.03K/s</span>
    <span><svg class="dnc" viewBox="0 0 8 8"><path d="M4 0v6M1 4l3 3 3-3"/></svg>0.03K/s</span>
  </div>
  <button class="plus" aria-label="加速"><svg viewBox="0 0 20 20"><circle cx="9" cy="11" r="8" fill="#3a86e0"/><path d="M9 7v8M5 11h8" stroke="#fff" stroke-width="2"/><circle cx="15" cy="5" r="4" fill="#d92b2b"/></svg></button>
</aside>

<aside class="mark">
  <svg viewBox="0 0 72 82">
    <g stroke="#dcecf4" stroke-opacity=".8" stroke-width=".8">
    <path d="M36 0L15 12C28 12 42 16 56 29 55 20 53 13 48 7z" fill="#a0c3d6"/>
    <path d="M50 8L72 21V51C66 38 60 31 56 28 55 19 53 13 50 8z" fill="#2b9bd0"/>
    <path d="M0 21L13 14C30 12 38 16 43 19 22 17 8 27 0 42z" fill="#6ab8de"/>
    <path d="M0 43C5 30 13 25 18 23 14 38 17 55 22 71L0 61z" fill="#7cc4e8"/>
    <path d="M17 54C28 68 45 70 57 70L36 82 22 74C19 67 17 60 17 54z" fill="#45b1e4"/>
    <path d="M56 32C60 46 50 60 32 67 45 70 52 70 59 69L72 61V52C68 42 63 36 56 32z" fill="#52b5e6"/>
    <path d="M36 23L51 32 36 41 21 32z" fill="#6fbfe6"/><path d="M21 32L36 41V59L21 50z" fill="#52b3e4"/><path d="M51 32L36 41V59L51 50z" fill="#3aa9e0"/>
    </g>
  </svg>
  <div class="words"><b><span>3D</span>世界网</b><small>WWW.3DSJW.COM</small></div>
</aside>
</div>
</body>
</html>
```
FILE: styles.css
```css
* { box-sizing: border-box; }
body {
  margin: 0;
  font: 12px/12px "Noto Sans CJK SC", sans-serif;
  color: #000;
  overflow: hidden;
}
.defs { position: absolute; width: 0; height: 0; }
button {
  font: inherit;
  color: inherit;
  background: none;
  border: 0;
  padding: 0;
  margin: 0;
  white-space: nowrap;
}
svg { display: block; flex: none; }
.dots { fill: none; stroke: #999; stroke-dasharray: 1 1; }
.dd { width: 6px; height: 4px; }
.app {
  position: relative;
  display: flex;
  flex-direction: column;
  height: 100vh;
  background: #d8d8d8;
}

.titlebar {
  flex: none;
  display: flex;
  align-items: center;
  height: 22px;
  padding: 0 2px 0 3px;
  background: linear-gradient(#000 0 1px, #77767b 2px, #4c4b50 8px, #1c1c1c 9px 20px, #000 21px);
  color: #fff;
}
.s18 { width: 18px; height: 18px; }
.titlebar h1 {
  flex: 1;
  margin: 0 0 0 3px;
  font: 13px/20px "Open Sans", "Noto Sans CJK SC", sans-serif;
}
.brand { font: 900 13px/20px "Noto Sans", sans-serif; margin-right: 28px; }
.winbtns, .mdibtns { display: flex; gap: 2px; }
.winbtns button {
  width: 19px;
  height: 18px;
  display: grid;
  place-items: center;
  border: 1px solid #777;
  border-radius: 3px;
  background: linear-gradient(#7a7a7c, #2e2e30 60%);
}
.winbtns .close { background: linear-gradient(#ff9a80, #e2391a 50%); }
.winbtns svg { width: 12px; height: 12px; }

.menubar {
  flex: none;
  display: flex;
  align-items: center;
  height: 24px;
  padding: 0 4px;
  background: #e6e6e6;
  border-bottom: 1px solid #bdbdbd;
}
.menus { flex: 1; display: flex; gap: 13px; margin-left: 3px; padding-top: 2px; }
.menubar i { font: 10px/12px "Liberation Mono", monospace; white-space: pre; }
.mdibtns button {
  width: 17px;
  height: 17px;
  display: grid;
  place-items: center;
  border: 1px solid #888;
  border-radius: 3px;
  background: #f2f2f2;
  color: #555;
}
.mdibtns svg { width: 10px; height: 10px; }

.grip {
  flex: none;
  align-self: stretch;
  width: 2px;
  margin: 5px 1px 5px 4px;
  background: repeating-linear-gradient(#a6a6a6 0 2px, #ececec 2px 4px);
}
.menubar .grip { margin: 5px 2px 3px 0; }

.toolbars {
  flex: none;
  background: linear-gradient(#e2e2e2, #cbcbcb);
  border-bottom: 1px solid #999;
}
.row { display: flex; height: 62px; border-bottom: 1px solid #efefef; }
.row + .row { border: 0; }
.group {
  display: flex;
  align-items: center;
  padding-right: 3px;
  border-right: 1px solid #b9b9b9;
  border-bottom: 1px solid #bdbdbd;
  box-shadow: 1px 0 #ececec;
}
.row + .row .group { border-bottom: 0; padding-right: 4px; }
.spaced { margin-left: 14px; border-left: 1px solid #eee; }
.ib, .ddb { display: grid; place-items: center; height: 30px; }
.ib { width: 31px; }
.tight { width: 29px; }
.ib svg { width: 24px; height: 24px; }
.ddb { width: 13px; }
.wide { display: flex; align-items: center; gap: 4px; height: 30px; }
.wide svg { width: 24px; height: 24px; }
.wide .dd { width: 6px; height: 4px; }
.start { width: 68px; padding-left: 4px; gap: 3px; }
.finder { width: 95px; padding-left: 3px; }
.sep {
  align-self: stretch;
  width: 2px;
  margin: 2px;
  background: linear-gradient(90deg, #b5b5b5 50%, #f2f2f2 50%);
}
.more { align-self: flex-end; width: 10px; height: 12px; display: grid; place-items: center; }
.row .more { margin-bottom: 1px; }
.tb {
  align-self: flex-start;
  display: flex;
  flex-direction: column;
  align-items: center;
  gap: 3px;
  width: 60px;
  height: 58px;
  margin-top: 2px;
  padding: 3px 4px 0;
  border: 1px solid transparent;
  white-space: normal;
}
.tb svg { width: 24px; height: 24px; }
.on { background: #fff; border-color: #555; border-radius: 3px; }
.tb:disabled { color: #a2a2a2; }

.selbar {
  flex: none;
  display: flex;
  align-items: center;
  height: 27px;
  padding: 0 5px;
  background: linear-gradient(#c6c6c6, #dadada 70%);
  border-bottom: 1px solid #b3b3b3;
}
.selbar button { width: 24px; height: 20px; display: grid; place-items: center; }
.selbar svg { width: 18px; height: 18px; }
.selbar .dd { width: 6px; height: 4px; }
.selbar .sep { margin: 2px 1px; }
.selbar .end { margin-left: auto; width: 6px; align-items: end; }
.combo {
  display: grid;
  width: 111px;
  height: 18px;
  border: 1px solid #777;
  border-radius: 3px;
  background: #fff;
  overflow: hidden;
}
.second { width: 116px; margin: 0 4px 0 7px; }
.combo select {
  grid-area: 1 / 1;
  appearance: none;
  border: 0;
  padding: 0 18px 0 0;
  background: transparent;
  font: 12px/16px "Noto Sans CJK SC", sans-serif;
  color: #000;
}
.cbtn {
  grid-area: 1 / 1;
  justify-self: end;
  display: grid;
  place-items: center;
  width: 17px;
  background: linear-gradient(#d9efff, #5fb2f0);
  border-left: 1px solid #4d86c0;
  pointer-events: none;
}
.selbar .cbtn svg { width: 12px; height: 8px; }

.status {
  flex: none;
  display: flex;
  align-items: stretch;
  height: 21px;
  border-top: 1px solid #f4f4f4;
}
.cue { width: 47.1%; border-right: 1px solid #b5b5b5; }
.status strong {
  flex: 1;
  padding-left: 2px;
  font: bold 12px/21px "Liberation Mono", "Noto Sans CJK SC", monospace;
}
.cell { border-left: 1px solid #b5b5b5; box-shadow: inset 1px 0 #eee; }
.c1 { width: 19px; }
.c2 { width: 36px; }
.c3 { width: 23px; display: grid; place-items: center; }
.c3 svg { width: 14px; height: 14px; }

.main { flex: 1; display: flex; min-height: 0; }
.strip {
  flex: none;
  width: 33px;
  display: flex;
  flex-direction: column;
  align-items: flex-end;
  padding-top: 18px;
  border-top: 1px solid #888;
  background: linear-gradient(90deg, #b8b8b8, #a0a0a0);
}
.strip > button {
  width: 27px;
  height: 41px;
  margin-bottom: 1px;
  display: grid;
  place-items: center;
  background: linear-gradient(90deg, #e2e2e2, #c4c4c4);
  border: 1px solid #777;
  border-right-color: #999;
  border-radius: 4px 0 0 4px;
}
.strip > .active { width: 29px; background: #ededed; border-right: 0; }
.strip > .gap { margin-top: 12px; }
.strip > button svg { width: 24px; height: 26px; }
.curl { width: 28px; height: 8px; margin: 3px 0 2px; }
.nudge { margin-right: 7px; }
.nudge button {
  display: grid;
  place-items: center;
  width: 16px;
  height: 15px;
  margin-bottom: 1px;
  border: 1px solid #999;
  background: #e6e6e6;
}
.nudge svg { width: 10px; height: 10px; fill: #444; stroke: #444; stroke-width: 1px; }
.nudge .off svg { fill: #aaa; stroke: #aaa; }

.panel {
  flex: none;
  width: 242px;
  display: flex;
  flex-direction: column;
  padding: 0 9px 4px 9px;
  background: #ededed;
  border-top: 1px solid #888;
  border-right: 2px solid #9a9a9a;
}
.panel h2 {
  display: flex;
  align-items: center;
  gap: 12px;
  height: 31px;
  margin: 0;
  padding-left: 6px;
  font: bold 13px/16px "Liberation Mono", "Noto Sans CJK SC", monospace;
}
.panel h2 svg { width: 12px; height: 12px; }
.treebox {
  flex: 1;
  min-height: 0;
  display: grid;
  grid-template: 1fr 18px / 1fr 17px;
  border: 1px solid #777;
  background: #f0f0f0;
}
.treeview { overflow: hidden; padding-left: 1px; background: #fff; }
.treeview table { width: 100%; table-layout: fixed; border-collapse: separate; border-spacing: 0; }
.cname { width: 155px; }
th {
  height: 17px;
  padding: 0 0 0 6px;
  text-align: left;
  font-weight: normal;
  background: linear-gradient(#f6f6f6, #dcdfe0);
  border-right: 1px solid #aaa;
  border-bottom: 1px solid #999;
}
td { height: 20px; padding: 0; border-bottom: 1px solid #e4e4e4; }
td:first-child { border-right: 1px solid #000; }
tr:nth-child(even) td { background: #f7f7f7; }
td div { display: flex; align-items: center; height: 19px; }
td svg { width: 16px; height: 20px; }
td .g { width: 19px; }
td .m { width: 8px; height: 15px; margin-left: 8px; }
td span {
  flex: 1;
  height: 19px;
  padding-left: 2px;
  font: 10px/21px "Liberation Mono", monospace;
}
.op span { color: #2a69b5; }
.sel span, tr.sel td:last-child { background: #3399ff; color: #fff; }
.sel span { border-left: 1px dotted #d27400; padding-left: 1px; }
.sel td:last-child { border-bottom: 1px dotted #d27400; }
.vscroll {
  display: flex;
  flex-direction: column;
  align-items: center;
  padding: 24px 0 6px;
  background: linear-gradient(#e2e4e4 0 17px, #f0f0f0 17px);
}
.up { transform: rotate(180deg); }
.left { transform: rotate(90deg); }
.right { transform: rotate(-90deg); }
.track { flex: 141; }
.vscroll .thumb { flex: 125; width: 15px; margin-bottom: 24px; }
.thumb {
  display: grid;
  place-items: center;
  border: 1px solid #999;
  border-radius: 2px;
  background: linear-gradient(90deg, #f6f6f6, #d4d4d6);
}
.thumb i { width: 7px; height: 8px; background: repeating-linear-gradient(#555 0 1px, transparent 1px 3px); }
.hscroll { grid-column: 1; display: flex; align-items: center; padding: 0 6px; }
.hscroll .thumb { width: 49px; height: 15px; margin: 0 auto 0 7px; background: linear-gradient(#f6f6f6, #c9c9cb); }
.hscroll i { width: 8px; height: 7px; background: repeating-linear-gradient(90deg, #555 0 1px, transparent 1px 3px); }
.splitter { display: flex; align-items: center; gap: 4px; height: 12px; }
.splitter::before, .splitter::after { content: ""; flex: 1; height: 1px; background: #aaa; }
.splitter span { width: 38px; height: 5px; border: 1px solid #aaa; background: #ddd; }
.folds { border: 1px solid #aaa; border-top: 0; }
.folds button {
  display: flex;
  align-items: center;
  width: 100%;
  height: 23px;
  background: linear-gradient(#fff, #f2f2f2 50%, #dcdfdf 52%, #e8e8e8);
  font-weight: bold;
  text-align: left;
}
.folds button + button { border-top: 1px solid #aaa; }
.folds span { flex: 1; padding-left: 6px; line-height: 22px; border-right: 1px solid #aaa; font-size: 13px; }
.folds svg { width: 12px; height: 12px; margin: 0 5px; }

.view {
  flex: 1;
  min-width: 0;
  border: 1px solid #e8903c;
  background: linear-gradient(#222325, #555658 82%);
}
.view svg { width: 100%; height: 100%; }
.cad { font: 12px "Noto Sans", sans-serif; }
.triad { font: 8px "Noto Sans", sans-serif; }

.bottombar {
  flex: none;
  display: flex;
  height: 62px;
  background: linear-gradient(#e6e6e6, #cbcbcb);
}
.bottombar .tb { margin-top: 2px; }
.bottombar .group { border-bottom: 0; }
.bottombar .more { margin-bottom: 2px; }

.meter {
  position: absolute;
  right: 289px;
  bottom: 3px;
  display: flex;
  align-items: center;
  width: 125px;
  height: 39px;
  border: 1px solid #aaa;
  border-radius: 20px;
  background: linear-gradient(#fafafa, #dedede);
  box-shadow: 0 1px 3px #8888;
}
.ball {
  flex: none;
  width: 46px;
  height: 46px;
  border: 2px solid #17865a;
  outline: 2px solid #f2f2f2;
  border-radius: 50%;
  background: linear-gradient(#187c55 0 26%, #5cd868 28%, #3ec452);
  color: #fff;
  text-align: center;
  font: 14px/40px "Open Sans", sans-serif;
}
.rates { display: grid; gap: 3px; margin: 0 3px 0 4px; font: 10px/12px "Liberation Sans", sans-serif; }
.rates span { display: flex; align-items: center; gap: 5px; }
.rates svg { width: 8px; height: 8px; fill: none; stroke-width: 2px; }
.upc { stroke: #e3503a; }
.dnc { stroke: #1e9650; }
.plus svg { width: 20px; height: 20px; }

.mark {
  position: absolute;
  right: 19px;
  bottom: 12px;
  display: flex;
  gap: 8px;
  color: #fff;
  pointer-events: none;
}
.mark > svg { width: 72px; height: 82px; opacity: .85; }
.words { display: flex; flex-direction: column; gap: 5px; width: 184px; padding-top: 5px; opacity: .5; }
.mark b { height: 44px; font-size: 40px; line-height: 44px; white-space: nowrap; }
.mark b span { font: bold 45px/44px "Liberation Sans", sans-serif; }
.mark small { font: 18px/20px "DejaVu Sans", sans-serif; }
```
